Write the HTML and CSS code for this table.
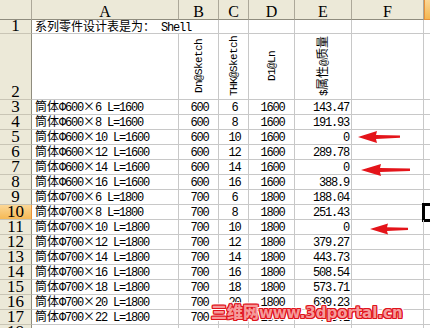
FILE: index.html
```html
<!DOCTYPE html>
<html>
<head>
<meta charset="utf-8">
<link rel="stylesheet" href="styles.css">
</head>
<body>
<div class="sheet">
  <div class="corner"></div>
  <div class="ch">A</div><div class="ch">B</div><div class="ch">C</div><div class="ch">D</div><div class="ch">E</div><div class="ch">F</div><div class="ch ch-sel">G</div>

  <div class="rh">1</div>
  <div class="c span2"><span class="cj">系列零件设计表是为：</span> Shell</div>
  <div class="c"></div><div class="c"></div><div class="c"></div><div class="c"></div><div class="c"></div>

  <div class="rh">2</div>
  <div class="c"></div>
  <div class="c vt"><span class="vtxt">Dn@Sketch</span></div>
  <div class="c vt"><span class="vtxt">THK@Sketch</span></div>
  <div class="c vt"><span class="vtxt">D1@Ln</span></div>
  <div class="c vt"><span class="vtxt">$<span class="cj">属性</span>@<span class="cj">质量</span></span></div>
  <div class="c"></div><div class="c"></div>

  <div class="rh">3</div><div class="c"><span class="cj">筒体</span>Φ600<span class="cj x">×</span>6 L=1600</div><div class="c ct">600</div><div class="c ct">6</div><div class="c ct">1600</div><div class="c rt">143.47</div><div class="c"></div><div class="c"></div>
  <div class="rh">4</div><div class="c"><span class="cj">筒体</span>Φ600<span class="cj x">×</span>8 L=1600</div><div class="c ct">600</div><div class="c ct">8</div><div class="c ct">1600</div><div class="c rt">191.93</div><div class="c"></div><div class="c"></div>
  <div class="rh">5</div><div class="c"><span class="cj">筒体</span>Φ600<span class="cj x">×</span>10 L=1600</div><div class="c ct">600</div><div class="c ct">10</div><div class="c ct">1600</div><div class="c rt">0</div><div class="c"></div><div class="c"></div>
  <div class="rh">6</div><div class="c"><span class="cj">筒体</span>Φ600<span class="cj x">×</span>12 L=1600</div><div class="c ct">600</div><div class="c ct">12</div><div class="c ct">1600</div><div class="c rt">289.78</div><div class="c"></div><div class="c"></div>
  <div class="rh">7</div><div class="c"><span class="cj">筒体</span>Φ600<span class="cj x">×</span>14 L=1600</div><div class="c ct">600</div><div class="c ct">14</div><div class="c ct">1600</div><div class="c rt">0</div><div class="c"></div><div class="c"></div>
  <div class="rh">8</div><div class="c"><span class="cj">筒体</span>Φ600<span class="cj x">×</span>16 L=1600</div><div class="c ct">600</div><div class="c ct">16</div><div class="c ct">1600</div><div class="c rt">388.9</div><div class="c"></div><div class="c"></div>
  <div class="rh">9</div><div class="c"><span class="cj">筒体</span>Φ700<span class="cj x">×</span>6 L=1800</div><div class="c ct">700</div><div class="c ct">6</div><div class="c ct">1800</div><div class="c rt">188.04</div><div class="c"></div><div class="c"></div>
  <div class="rh rh-sel">10</div><div class="c"><span class="cj">筒体</span>Φ700<span class="cj x">×</span>8 L=1800</div><div class="c ct">700</div><div class="c ct">8</div><div class="c ct">1800</div><div class="c rt">251.43</div><div class="c"></div><div class="c active"></div>
  <div class="rh">11</div><div class="c"><span class="cj">筒体</span>Φ700<span class="cj x">×</span>10 L=1800</div><div class="c ct">700</div><div class="c ct">10</div><div class="c ct">1800</div><div class="c rt">0</div><div class="c"></div><div class="c"></div>
  <div class="rh">12</div><div class="c"><span class="cj">筒体</span>Φ700<span class="cj x">×</span>12 L=1800</div><div class="c ct">700</div><div class="c ct">12</div><div class="c ct">1800</div><div class="c rt">379.27</div><div class="c"></div><div class="c"></div>
  <div class="rh">13</div><div class="c"><span class="cj">筒体</span>Φ700<span class="cj x">×</span>14 L=1800</div><div class="c ct">700</div><div class="c ct">14</div><div class="c ct">1800</div><div class="c rt">443.73</div><div class="c"></div><div class="c"></div>
  <div class="rh">14</div><div class="c"><span class="cj">筒体</span>Φ700<span class="cj x">×</span>16 L=1800</div><div class="c ct">700</div><div class="c ct">16</div><div class="c ct">1800</div><div class="c rt">508.54</div><div class="c"></div><div class="c"></div>
  <div class="rh">15</div><div class="c"><span class="cj">筒体</span>Φ700<span class="cj x">×</span>18 L=1800</div><div class="c ct">700</div><div class="c ct">18</div><div class="c ct">1800</div><div class="c rt">573.71</div><div class="c"></div><div class="c"></div>
  <div class="rh">16</div><div class="c"><span class="cj">筒体</span>Φ700<span class="cj x">×</span>20 L=1800</div><div class="c ct">700</div><div class="c ct">20</div><div class="c ct">1800</div><div class="c rt">639.23</div><div class="c"></div><div class="c"></div>
  <div class="rh">17</div><div class="c"><span class="cj">筒体</span>Φ700<span class="cj x">×</span>22 L=1800</div><div class="c ct">700</div><div class="c ct">22</div><div class="c ct">1800</div><div class="c rt">705.1</div><div class="c"></div><div class="c"></div>
  <div class="rh">18</div><div class="c"></div><div class="c"></div><div class="c"></div><div class="c"></div><div class="c"></div><div class="c"></div><div class="c"></div>
</div>

<svg class="arrows" width="430" height="328" viewBox="0 0 430 328">
  <g fill="#e4141a">
    <path d="M358 137 L377 131 L376 135 L400 135.5 L400 137.8 L376 139 L377 143 Z"/>
    <path d="M361 170 L381 164 L380 168 L410 168.5 L410 171 L380 172 L381 176 Z"/>
    <path d="M370 229 L388 223.5 L387 227.2 L408 227.7 L408 230 L387 230.9 L388 234.5 Z"/>
  </g>
</svg>

<div class="watermark"><span class="wm-cj">三维网</span>www.3dportal.cn</div>
</body>
</html>
```

FILE: styles.css
```css
html, body {
  margin: 0;
  padding: 0;
  background: #fff;
  overflow: hidden;
}

body {
  width: 430px;
  height: 328px;
  position: relative;
}

.sheet {
  display: grid;
  grid-template-columns: 32px 147px 40px 30px 46px 57px 72px 110px;
  grid-template-rows: 20px 14px 66px repeat(16, 15px);
  width: 534px;
  font-family: "Liberation Mono", monospace;
  font-size: 12px;
  letter-spacing: -1.2px;
  color: #000;
}

.cj {
  font-family: "Noto Sans CJK SC", sans-serif;
  font-size: 12px;
  letter-spacing: 0;
  line-height: 0;
}

.x {
  display: inline-block;
  width: 12px;
  text-align: center;
}

.corner,
.ch {
  background: #ece9d8;
  border-right: 1px solid #aca899;
  border-bottom: 1px solid #8f8c7e;
  box-sizing: border-box;
}

.ch {
  font-family: "Liberation Serif", serif;
  font-size: 16px;
  letter-spacing: 0;
  line-height: 17px;
  padding-top: 3px;
  text-align: center;
}

.ch-sel {
  background: linear-gradient(#fbd796, #f4b650);
  border-left: 1px solid #e8913a;
  border-bottom-color: #e8913a;
}

.rh {
  background: #ece9d8;
  border-right: 1px solid #8f8c7e;
  border-bottom: 1px solid #c9c5b5;
  box-sizing: border-box;
  display: flex;
  align-items: flex-end;
  justify-content: center;
  font-family: "Liberation Serif", serif;
  font-size: 17px;
  letter-spacing: 0;
  line-height: 14px;
  overflow: visible;
}

.rh-sel {
  background: linear-gradient(#fbd796, #f5b955);
  border-right-color: #e8913a;
}

.c {
  border-right: 1px solid #c8c8c8;
  border-bottom: 1px solid #c8c8c8;
  box-sizing: border-box;
  padding: 2px 2px 0 3px;
  line-height: 13px;
  white-space: nowrap;
  overflow: visible;
}

.span2 {
  grid-column: span 2;
}

.ct {
  text-align: center;
  padding-left: 2px;
  padding-right: 0;
}

.rt {
  text-align: right;
  padding-right: 2px;
}

.vt {
  display: flex;
  align-items: center;
  justify-content: center;
  padding: 0;
}

.vtxt {
  writing-mode: vertical-rl;
  text-orientation: sideways;
  transform: rotate(180deg);
  line-height: 12px;
  font-size: 11px;
  letter-spacing: -0.6px;
}

.vtxt .cj {
  line-height: 12px;
  font-size: 12px;
}

.active {
  outline: 3px solid #000;
  outline-offset: -1px;
}

.arrows {
  position: absolute;
  left: 0;
  top: 0;
  pointer-events: none;
}

.watermark {
  position: absolute;
  left: 211px;
  top: 301px;
  font-family: "DejaVu Sans", sans-serif;
  font-weight: bold;
  font-size: 15px;
  line-height: 20px;
  letter-spacing: 0;
  color: #f59a9a;
  white-space: nowrap;
  text-shadow:
    1px 0 0 #e0131c, -1px 0 0 #e0131c, 0 1px 0 #e0131c, 0 -1px 0 #e0131c,
    1px 1px 0 #e0131c, -1px -1px 0 #e0131c, 1px -1px 0 #e0131c, -1px 1px 0 #e0131c,
    2px 0 0 #fff, -2px 0 0 #fff, 0 2px 0 #fff, 0 -2px 0 #fff,
    2px 2px 0 #fff, -2px -2px 0 #fff, 2px -2px 0 #fff, -2px 2px 0 #fff;
}

.wm-cj {
  font-family: "Noto Sans CJK SC", sans-serif;
  font-weight: 900;
  font-size: 16px;
}
```
